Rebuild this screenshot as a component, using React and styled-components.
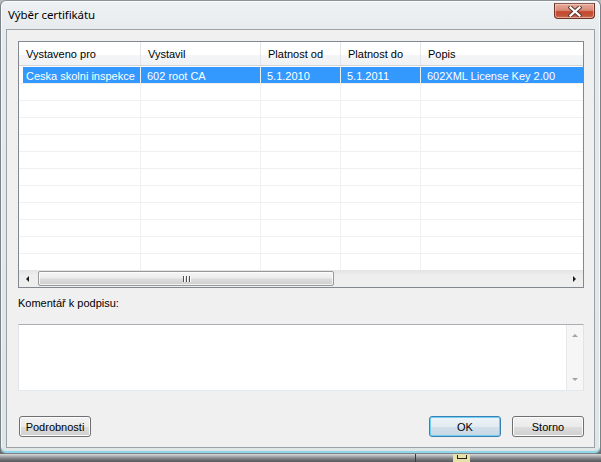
import React from 'react';
import styled, { createGlobalStyle } from 'styled-components';

const GlobalStyle = createGlobalStyle`
  html, body {
    margin: 0;
    padding: 0;
  }
  body {
    width: 601px;
    height: 462px;
    overflow: hidden;
    background: linear-gradient(#b9bcbf, #6a6d70);
    font-family: 'Liberation Sans', Arial, sans-serif;
  }
`;

const columns = [
  { title: 'Vystaveno pro', width: 122 },
  { title: 'Vystavil', width: 120 },
  { title: 'Platnost od', width: 80 },
  { title: 'Platnost do', width: 80 },
  { title: 'Popis', width: 200 },
];

const rows = [
  ['Ceska skolni inspekce', '602 root CA', '5.1.2010', '5.1.2011', '602XML License Key 2.00'],
];

const emptyRows = 11;

const CloseGlyph = () => (
  <svg width="14" height="11" viewBox="0 0 14 11">
    <path d="M2.5 1.5 L11.5 9.5 M11.5 1.5 L2.5 9.5" stroke="#5a3a34" strokeWidth="4.2" strokeLinecap="square" />
    <path d="M2.5 1.5 L11.5 9.5 M11.5 1.5 L2.5 9.5" stroke="#ffffff" strokeWidth="2.2" strokeLinecap="square" />
  </svg>
);

const Arrow = ({ dir, color = '#1c1c1c' }) => {
  const d = {
    left: 'M4 1 L1 4 L4 7 Z',
    right: 'M1 1 L4 4 L1 7 Z',
    up: 'M1 4 L4 1 L7 4 Z',
    down: 'M1 1 L4 4 L7 1 Z',
  }[dir];
  const horizontal = dir === 'left' || dir === 'right';
  return (
    <svg width={horizontal ? 5 : 8} height={horizontal ? 8 : 5} viewBox={horizontal ? '0 0 5 8' : '0 0 8 5'}>
      <path d={d} fill={color} />
    </svg>
  );
};

export default function App() {
  return (
    <>
      <GlobalStyle />
      <Window>
        <TitleBar>
          <Title>Výběr certifikátu</Title>
          <CloseButton>
            <CloseGlyph />
          </CloseButton>
        </TitleBar>
        <Client>
          <ListView>
            <ListViewport>
              <HeaderRow>
                {columns.map((c) => (
                  <HeaderCell key={c.title} $width={c.width}>
                    {c.title}
                  </HeaderCell>
                ))}
              </HeaderRow>
              <Body>
                {rows.map((r, i) => (
                  <Row key={i}>
                    {r.map((v, j) => (
                      <Cell key={j} $width={columns[j].width} $selected $first={j === 0}>
                        {v}
                      </Cell>
                    ))}
                  </Row>
                ))}
                {Array.from({ length: emptyRows }).map((_, i) => (
                  <Row key={'e' + i}>
                    {columns.map((c, j) => (
                      <Cell key={j} $width={c.width} />
                    ))}
                  </Row>
                ))}
              </Body>
            </ListViewport>
            <HScroll>
              <ScrollButton>
                <Arrow dir="left" />
              </ScrollButton>
              <HTrack>
                <HThumb>
                  <Gripper>
                    <span />
                    <span />
                    <span />
                  </Gripper>
                </HThumb>
              </HTrack>
              <ScrollButton>
                <Arrow dir="right" />
              </ScrollButton>
            </HScroll>
          </ListView>

          <Label>Komentář k podpisu:</Label>

          <CommentBox>
            <CommentArea />
            <VScroll>
              <Arrow dir="up" color="#a3a3a3" />
              <Arrow dir="down" color="#a3a3a3" />
            </VScroll>
          </CommentBox>

          <ButtonRow>
            <Button>Podrobnosti</Button>
            <Spacer />
            <Button $default>OK</Button>
            <Button>Storno</Button>
          </ButtonRow>
        </Client>
      </Window>
      <Desktop>
        <DesktopDivider />
        <TrayIcon />
      </Desktop>
    </>
  );
}

const Window = styled.div`
  width: 601px;
  height: 454px;
  box-sizing: border-box;
  display: flex;
  flex-direction: column;
  background: linear-gradient(180deg, #eef1f3 0%, #e6eaed 8%, #e2e7ea 60%, #dfe6e6 100%);
  border: 1px solid #7c8388;
  border-top-color: #8d9296;
  border-radius: 6px;
  box-shadow: inset 0 -2px 0 #8fd6ea, inset 0 0 0 1px rgba(255, 255, 255, 0.7);
  overflow: hidden;
`;

const TitleBar = styled.div`
  height: 28px;
  display: flex;
  align-items: flex-start;
  padding: 0 5px 0 7px;
`;

const Title = styled.div`
  font-family: 'Noto Sans', 'Open Sans', sans-serif;
  font-size: 11.5px;
  color: #000;
  margin-top: 6px;
  letter-spacing: -0.1px;
`;

const CloseButton = styled.div`
  margin-left: auto;
  margin-top: 2px;
  width: 41px;
  height: 16px;
  box-sizing: border-box;
  display: flex;
  align-items: center;
  justify-content: center;
  border: 1px solid #6b3328;
  border-top-color: #8a5a50;
  border-radius: 0 0 4px 4px;
  background: linear-gradient(180deg, #e6aa9c 0%, #d88b78 45%, #c5472e 55%, #c4563a 85%, #d77a5c 100%);
  box-shadow: inset 0 0 0 1px rgba(255, 220, 210, 0.5);
`;

const Client = styled.div`
  margin: 0 5px;
  height: 419px;
  box-sizing: border-box;
  border: 1px solid #9ba3a8;
  background: #f0f0f0;
  padding: 11px 10px 10px 11px;
  display: flex;
  flex-direction: column;
`;

const ListView = styled.div`
  height: 247px;
  box-sizing: border-box;
  border: 1px solid #828790;
  background: #fff;
  display: flex;
  flex-direction: column;
`;

const ListViewport = styled.div`
  flex: 1;
  overflow: hidden;
  font-size: 11px;
`;

const HeaderRow = styled.div`
  display: flex;
  height: 24px;
  box-sizing: border-box;
  border-bottom: 1px solid #d5d5d5;
  background: linear-gradient(180deg, #ffffff 0%, #ffffff 55%, #f4f5f7 56%, #f1f2f4 100%);
`;

const HeaderCell = styled.div`
  flex: 0 0 ${(p) => p.$width}px;
  box-sizing: border-box;
  border-right: 1px solid #e3e5e8;
  padding: 6px 0 0 7px;
  color: #000;
  white-space: nowrap;
  overflow: hidden;
`;

const Body = styled.div`
  padding-top: 1px;
`;

const Row = styled.div`
  display: flex;
  height: 17px;
`;

const Cell = styled.div`
  flex: 0 0 ${(p) => p.$width}px;
  box-sizing: border-box;
  border-right: 1px solid #f0f0f0;
  border-bottom: 1px solid #f0f0f0;
  padding: 3px 0 0 ${(p) => (p.$first ? 7 : 6)}px;
  color: ${(p) => (p.$selected ? '#fff' : '#000')};
  background: ${(p) =>
    p.$selected
      ? p.$first
        ? 'linear-gradient(to right, #fff 4px, #3399ff 4px)'
        : '#3399ff'
      : '#fff'};
  white-space: nowrap;
  overflow: hidden;
`;

const HScroll = styled.div`
  height: 17px;
  display: flex;
  background: linear-gradient(180deg, #e3e3e3 0%, #eeeeee 30%, #eeeeee 100%);
`;

const ScrollButton = styled.div`
  flex: 0 0 17px;
  display: flex;
  align-items: center;
  justify-content: center;
`;

const HTrack = styled.div`
  flex: 1;
  display: flex;
  align-items: center;
  padding-left: 2px;
`;

const HThumb = styled.div`
  width: 296px;
  height: 15px;
  box-sizing: border-box;
  border: 1px solid #989898;
  border-radius: 2px;
  background: linear-gradient(180deg, #f7f7f7 0%, #ececec 45%, #dcdcdc 55%, #cfcfcf 100%);
  box-shadow: inset 0 0 0 1px rgba(255, 255, 255, 0.7);
  display: flex;
  align-items: center;
  justify-content: center;
`;

const Gripper = styled.div`
  display: flex;
  gap: 2px;
  span {
    width: 1px;
    height: 6px;
    background: #505050;
    box-shadow: 1px 0 0 #fff;
  }
`;

const Label = styled.div`
  margin-top: 9px;
  font-size: 11px;
  line-height: 13px;
  color: #000;
`;

const CommentBox = styled.div`
  margin-top: 14px;
  height: 67px;
  box-sizing: border-box;
  border: 1px solid #e2e3ea;
  border-top-color: #abadb3;
  border-bottom-color: #e3e9ef;
  background: #fff;
  display: flex;
`;

const CommentArea = styled.div`
  flex: 1;
`;

const VScroll = styled.div`
  flex: 0 0 17px;
  box-sizing: border-box;
  border-left: 1px solid #e8e8e8;
  background: #f6f6f6;
  display: flex;
  flex-direction: column;
  align-items: center;
  justify-content: space-between;
  padding: 8px 0;
`;

const ButtonRow = styled.div`
  margin-top: 25px;
  display: flex;
  gap: 11px;
  padding-left: 1px;
`;

const Spacer = styled.div`
  flex: 1;
`;

const Button = styled.div`
  width: 72px;
  height: 21px;
  box-sizing: border-box;
  border: 1px solid ${(p) => (p.$default ? '#3c7fb1' : '#707070')};
  border-radius: 3px;
  background: ${(p) =>
    p.$default
      ? 'linear-gradient(180deg, #eef4f8 0%, #e3ebf2 50%, #d3e0eb 51%, #c6d7e4 100%)'
      : 'linear-gradient(180deg, #f2f2f2 0%, #ebebeb 50%, #dddddd 51%, #cfcfcf 100%)'};
  box-shadow: ${(p) =>
    p.$default ? 'inset 0 0 0 1px #6fd0f6' : 'inset 0 0 0 1px #fcfcfc'};
  font-size: 11px;
  color: #000;
  display: flex;
  align-items: center;
  justify-content: center;
`;

const Desktop = styled.div`
  height: 8px;
  position: relative;
  background: linear-gradient(180deg, #d8dadb 0%, #7a7d80 60%, #55585b 100%);
`;

const DesktopDivider = styled.div`
  position: absolute;
  left: 415px;
  top: 0;
  width: 1px;
  height: 8px;
  background: #3a3a3a;
`;

const TrayIcon = styled.div`
  position: absolute;
  left: 453px;
  top: 0;
  width: 17px;
  height: 8px;
  background: #e8e2a8;
  &::after {
    content: '';
    position: absolute;
    left: 4px;
    top: 1px;
    width: 8px;
    height: 3px;
    border: 1px solid #222;
    border-top: none;
  }
`;
